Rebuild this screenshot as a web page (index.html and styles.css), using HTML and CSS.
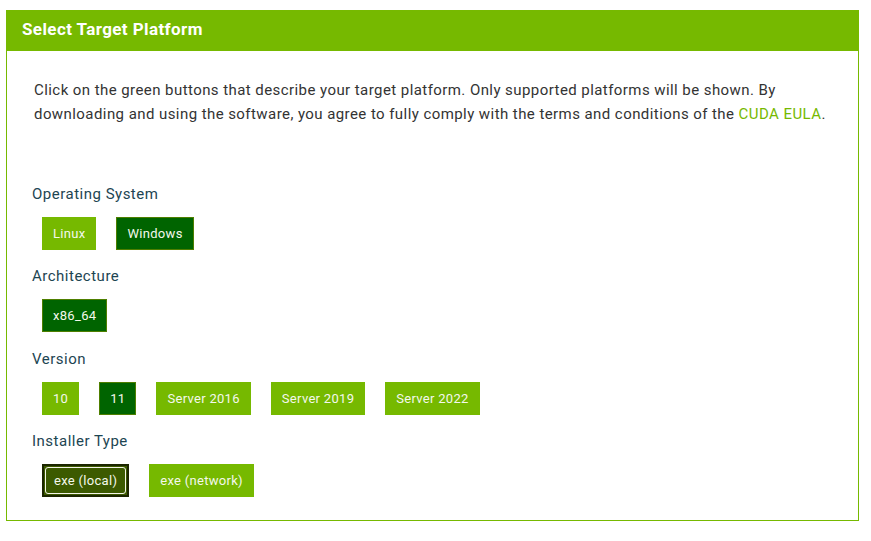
FILE: index.html
```html
<!DOCTYPE html>
<html>
<head>
    <meta charset="utf-8">
    <link rel="stylesheet" href="styles.css">
</head>
<body>
    <div class="panel">
        <div class="panel-header">Select Target Platform</div>
        <div class="panel-body">
            <p class="intro">Click on the green buttons that describe your target platform. Only supported platforms will be shown. By<br>downloading and using the software, you agree to fully comply with the terms and conditions of the <a href="#">CUDA EULA</a>.</p>

            <div class="option-group">
                <div class="option-label">Operating System</div>
                <div class="option-row">
                    <button class="opt">Linux</button>
                    <button class="opt selected">Windows</button>
                </div>
            </div>

            <div class="option-group">
                <div class="option-label">Architecture</div>
                <div class="option-row">
                    <button class="opt selected">x86_64</button>
                </div>
            </div>

            <div class="option-group">
                <div class="option-label">Version</div>
                <div class="option-row">
                    <button class="opt">10</button>
                    <button class="opt selected">11</button>
                    <button class="opt">Server 2016</button>
                    <button class="opt">Server 2019</button>
                    <button class="opt">Server 2022</button>
                </div>
            </div>

            <div class="option-group">
                <div class="option-label">Installer Type</div>
                <div class="option-row">
                    <button class="opt focused">exe (local)</button>
                    <button class="opt">exe (network)</button>
                </div>
            </div>
        </div>
    </div>
</body>
</html>
```

FILE: styles.css
```css
body {
    margin: 0;
    padding: 10px 12px 0 6px;
    font-family: Roboto, "Liberation Sans", sans-serif;
    background: #fff;
}

.panel {
    width: 853px;
    box-sizing: border-box;
    border: 1px solid #76b900;
}

.panel-header {
    background-color: #76b900;
    color: #fff;
    font-weight: bold;
    font-size: 17px;
    letter-spacing: 0.4px;
    height: 41px;
    line-height: 39px;
    padding-left: 16px;
    margin: -1px -1px 0 -1px;
}

.panel-body {
    padding: 27px 12px 23px 25px;
}

.intro {
    margin: 0 0 56px 2px;
    font-size: 15px;
    letter-spacing: 0.43px;
    line-height: 24px;
    color: #333;
    white-space: nowrap;
}

.intro a {
    color: #76b900;
    text-decoration: none;
}

.option-group {
    margin-bottom: 14px;
}

.option-group:nth-child(3) {
    margin-bottom: 15px;
}

.option-group:last-child {
    margin-bottom: 0;
}

.option-label {
    font-size: 15px;
    letter-spacing: 0.5px;
    line-height: 24px;
    color: #1d4552;
    margin-bottom: 11px;
}

.option-row {
    display: flex;
    gap: 20px;
    padding-left: 10px;
}

.opt {
    position: relative;
    height: 33px;
    padding: 0 10px;
    border: 1px solid #76b900;
    background-color: #76b900;
    color: #f4f8ec;
    font-family: inherit;
    font-size: 13px;
    letter-spacing: 0.3px;
    cursor: pointer;
}

.opt.selected {
    background-color: #006400;
    border-color: #4e7f00;
}

.opt.focused {
    background-color: #3c5a00;
    border: 2px solid #1c2600;
}

.opt.focused::after {
    content: "";
    position: absolute;
    top: 1px;
    left: 1px;
    right: 1px;
    bottom: 1px;
    border: 1px solid #f4f4e8;
    border-radius: 3px;
}
```
